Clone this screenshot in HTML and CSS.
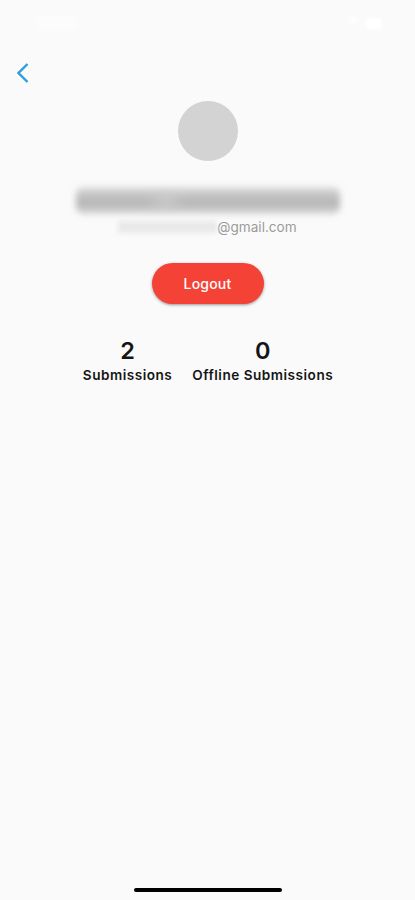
FILE: index.html
```html
<!DOCTYPE html>
<html lang="en">
<head>
  <meta charset="utf-8" />
  <meta name="viewport" content="width=device-width, initial-scale=1" />
  <title>Profile</title>
  <link rel="stylesheet" href="styles.css">
</head>
<body>
  <div class="statusbar" aria-hidden="true">
    <span class="clock"></span>
    <svg width="38" height="16" viewBox="0 0 38 16" fill="#fff">
      <path d="M0 2Q7 -2 14 2L7 10Z" opacity=".6" />
      <rect x="20" y="2" width="16" height="11" rx="3" />
    </svg>
  </div>
  <nav>
    <button class="back" aria-label="Back">
      <svg width="12" height="20" viewBox="0 0 12 20" fill="none" stroke="#2b9de0" stroke-width="2.4">
        <path d="M10.5 1L1.5 10L10.5 19" />
      </svg>
    </button>
  </nav>
  <main>
    <div class="avatar"></div>
    <div class="name"></div>
    <div class="email"><span class="hidden-part"></span><span>@gmail.com</span></div>
    <button class="logout">Logout</button>
    <div class="stats">
      <div class="stat">
        <div class="count">2</div>
        <div class="label">Submissions</div>
      </div>
      <div class="stat">
        <div class="count">0</div>
        <div class="label">Offline Submissions</div>
      </div>
    </div>
  </main>
  <footer><div class="home-bar"></div></footer>
</body>
</html>
```
FILE: styles.css
```css
* { box-sizing: border-box; }
body { margin: 0; height: 900px; overflow: hidden; display: flex; flex-direction: column; background: #fafafa; color: #151515; font-family: Inter, "Liberation Sans", sans-serif; }
button { border: 0; padding: 0; font-family: inherit; cursor: pointer; }
.statusbar { height: 50px; padding: 16px 31px 0 37px; display: flex; justify-content: space-between; }
.statusbar svg { filter: blur(1.5px); }
.clock { width: 41px; height: 15px; background: #fcfcfc; filter: blur(3px); }
nav { height: 51px; padding: 13px 0 0 17px; }
.back { display: block; width: 12px; height: 20px; background: none; }
.back svg { display: block; }
main { flex: 1; display: flex; flex-direction: column; align-items: center; }
.avatar { width: 60px; height: 60px; border-radius: 50%; background: #d3d3d3; }
.name { width: 264px; height: 27px; margin-top: 26px; border-radius: 7px; background: radial-gradient(ellipse 22px 24px at 34% 50%, rgba(208,208,208,.6), transparent), linear-gradient(#dedede 0, #b9b9b9 45%, #b9b9b9 65%, #d8d8d8 100%); filter: blur(3px); }
.email { display: flex; align-items: center; height: 18px; margin-top: 4px; font-size: 13.6px; line-height: 18px; color: #9a9a9a; }
.hidden-part { width: 99px; height: 12px; background: #e9e9e9; filter: blur(2px); }
.logout { width: 112px; height: 41px; margin-top: 27px; border-radius: 21px; background: #f44336; color: #fff; font-size: 14px; font-weight: 500; letter-spacing: .2px; box-shadow: 0 1px 3px rgba(0,0,0,.4); }
.stats { display: flex; gap: 20px; margin-top: 34px; padding-left: 1px; }
.stat { text-align: center; }
.count { height: 28px; font-size: 23.5px; line-height: 26px; font-weight: 600; }
.label { font-size: 13.6px; line-height: 18px; font-weight: 600; letter-spacing: .5px; }
footer { height: 15px; display: flex; justify-content: center; padding-top: 3px; }
.home-bar { width: 148px; height: 4px; border-radius: 3px; background: #000; }
```
